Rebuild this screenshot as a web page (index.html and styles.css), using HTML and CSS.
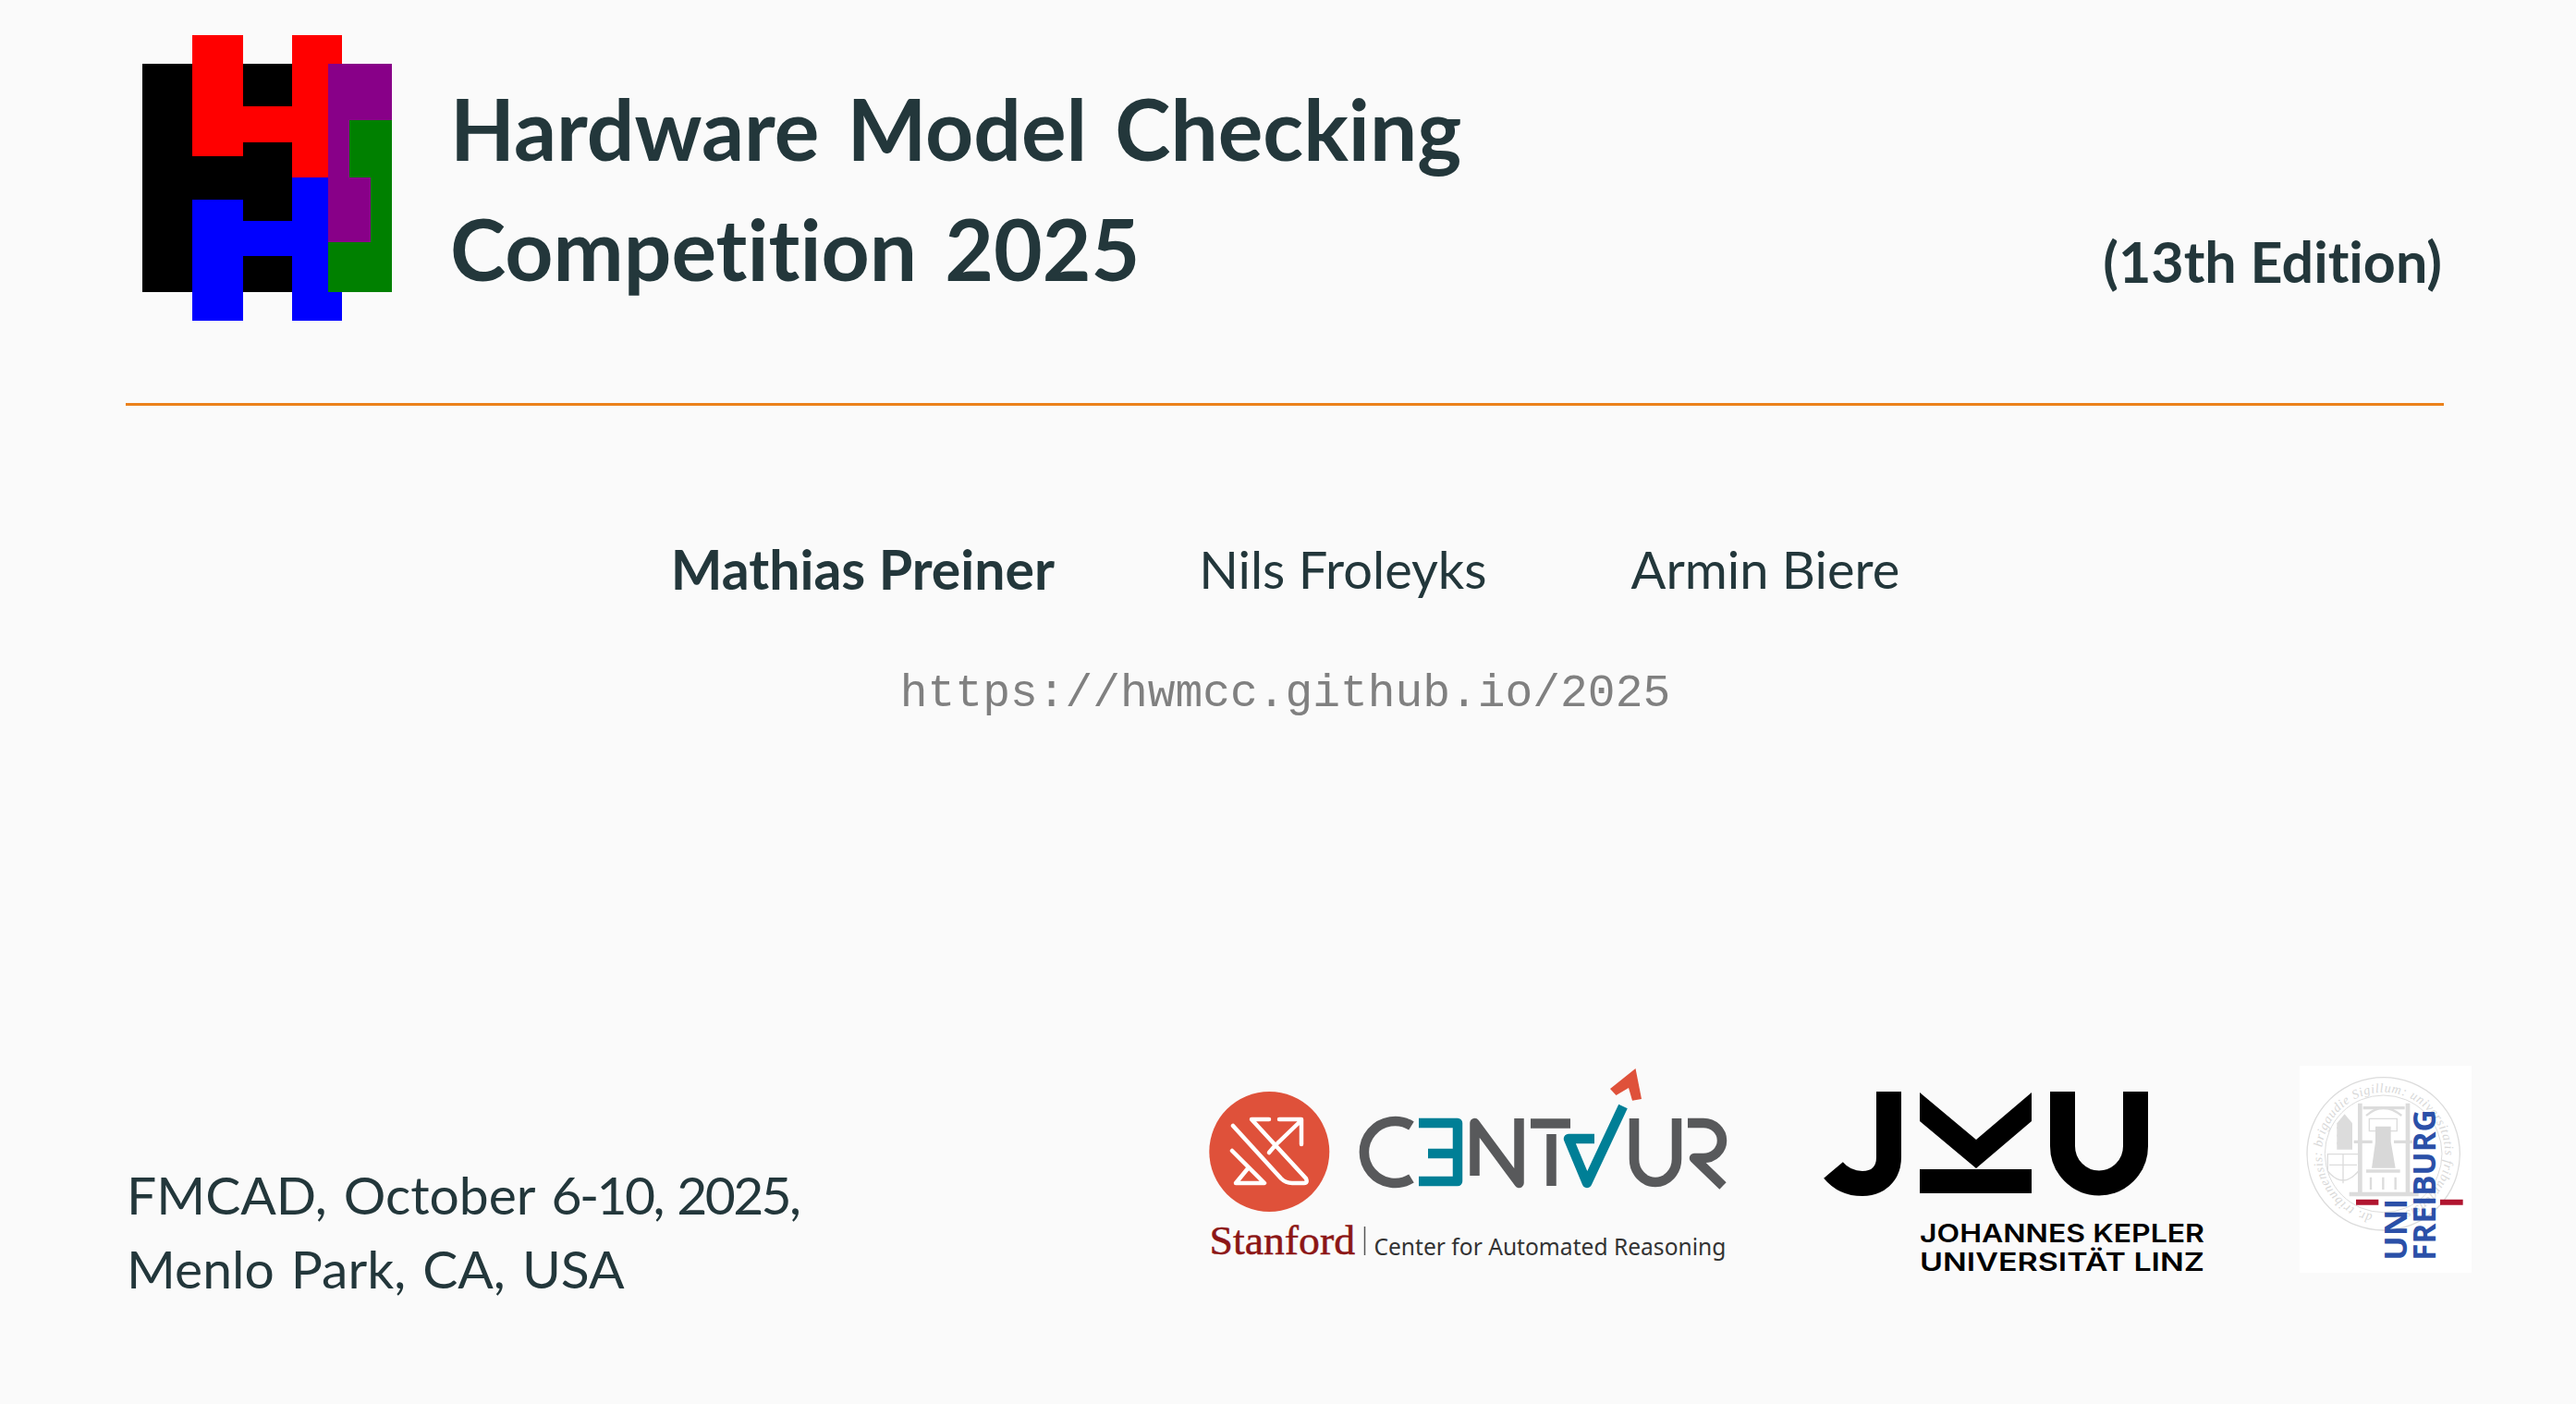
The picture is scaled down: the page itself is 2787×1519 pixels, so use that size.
FILE: index.html
```html
<!DOCTYPE html>
<html lang="en">
<head>
<meta charset="UTF-8">
<title>Hardware Model Checking Competition 2025</title>
<link rel="stylesheet" href="styles.css">
</head>
<body>
<div class="slide">
    <div class="header">
        <svg class="hwmcc-logo" viewBox="0 0 270 309" width="270" height="309" role="img" aria-label="HWMCC logo">
            <path fill="#000" d="M0 31H201V278H0z"/>
            <path fill="#f00" d="M54 0H109V77H162V0H216V31H201V154H162V116H109V131H54z"/>
            <path fill="#00f" d="M54 178H109V201H162V154H201V278H216V309H162V239H109V309H54z"/>
            <path fill="#808" d="M201 31H270V92H224V154H247V224H201z"/>
            <path fill="#008000" d="M224 92H270V278H201V224H247V154H224z"/>
        </svg>
        <h1 class="title">Hardware Model Checking<br>Competition 2025</h1>
        <div class="edition">(13th Edition)</div>
    </div>
    <div class="rule"></div>

    <div class="authors">
        <span class="author presenter">Mathias Preiner</span>
        <span class="author">Nils Froleyks</span>
        <span class="author">Armin Biere</span>
    </div>
    <div class="url">https://hwmcc.github.io/2025</div>

    <div class="footer">
        <div class="venue">FMCAD, October <span class="dates">6-10, 2025,</span><br>Menlo Park, CA, USA</div>
        <div class="logos">
            <svg class="logo-centaur" viewBox="0 0 620 260" width="620" height="260" role="img" aria-label="Centaur, Stanford Center for Automated Reasoning">
                <circle cx="93.3" cy="116" r="65" fill="#df513a"/>
                <g fill="none" stroke="#fff" stroke-width="4.5" stroke-linecap="round" stroke-linejoin="round">
                    <path d="M93 81H74L133 145Q135 150 131 150H118Q111 150 106 145L54 88"/>
                    <path d="M53 115L88 150H57L71 133"/>
                    <path d="M102 107L128 82M104 81H128V108M93 117L99 110"/>
                </g>
                <g fill="none" stroke="#58595b" stroke-width="10.5" stroke-linejoin="round">
                    <path d="M247 88A33.5 33.5 0 1 0 247 145"/>
                    <path d="M315.5 142V85L363.5 150V80"/>
                    <path d="M376 85.5H419M398.5 97V153"/>
                    <path d="M488 80V124A23 25 0 0 0 534 124V80"/>
                    <path d="M546 85H563A20 19 0 0 1 563 123H553L584 153"/>
                </g>
                <g fill="none" stroke="#007f96" stroke-width="10.5" stroke-linejoin="round">
                    <path d="M255 85H297V148H255M265 118H297"/>
                    <path d="M445 102H417L437 150L476 67"/>
                </g>
                <path fill="#df513a" d="M462 48L489.5 26L496 59L486 60.7L482 47L468.5 55z"/>
                <text class="stanford" x="28.5" y="227" textLength="157.5" lengthAdjust="spacingAndGlyphs">Stanford</text>
                <path stroke="#555" stroke-width="1.5" d="M196.5 197V228"/>
                <text class="car" x="206.4" y="228" textLength="381" lengthAdjust="spacingAndGlyphs">Center for Automated Reasoning</text>
            </svg>
            <svg class="logo-jku" viewBox="0 0 460 260" width="460" height="260" role="img" aria-label="Johannes Kepler Universität Linz">
                <g fill="none" stroke="#000" stroke-width="27">
                    <path d="M93.5 41V112C93.5 131 80 140.5 65 140.5C52 140.5 41 135 33.5 126"/>
                    <path d="M281.5 41V100A39.5 40 0 0 0 360.5 100V41"/>
                </g>
                <path d="M127 42L188 93L248 42V73L188 124L127 73zM127 125H248V151H127z"/>
                <text class="jku-name" x="127" y="204" textLength="308" lengthAdjust="spacingAndGlyphs">JOHANNES KEPLER</text>
                <text class="jku-name" x="127" y="235" textLength="308" lengthAdjust="spacingAndGlyphs">UNIVERSITÄT LINZ</text>
            </svg>
            <svg class="logo-freiburg" viewBox="54 38 558 672" width="186" height="224" role="img" aria-label="Uni Freiburg">
                <rect x="54" y="38" width="558" height="672" fill="#fff"/>
                <g fill="none" stroke="#dcdcdc">
                    <circle cx="326" cy="324" r="248" stroke-width="4"/>
                    <circle cx="326" cy="324" r="190" stroke-width="3"/>
                    <path stroke-width="14" d="M250 160V450M405 160V450M215 455H440"/>
                    <path stroke-width="10" d="M260 175H395M230 285H290M360 285H420M270 380H380"/>
                    <path stroke-width="7" d="M270 200Q325 150 385 200M175 240H225M175 265H225M175 290H225M285 400V440M325 400V440M365 400V440"/>
                    <path stroke-width="4" d="M145 325H245V380Q195 440 145 380zM195 325V420M150 360H240M280 210H370V250H280z"/>
                </g>
                <path fill="#dcdcdc" d="M200 195L225 225V310H175V225z"/>
                <path fill="#d8d8d8" d="M300 235H350V285L365 370H288L300 285z"/>
                <path id="seal-ring" fill="none" d="M291 521A200 200 0 1 1 361 521"/>
                <text class="seal-text"><textPath href="#seal-ring" textLength="1150">dr. tribunensis: brigaudie Sigillum: universitatis friburgensis</textPath></text>
                <path fill="#b0142f" d="M237 472H310V490H237zM510 472H584V490H510z"/>
                <text class="freiburg-name" transform="translate(402 670) rotate(-90)" textLength="200" lengthAdjust="spacingAndGlyphs">UNI</text>
                <text class="freiburg-name" transform="translate(495 670) rotate(-90)" textLength="490" lengthAdjust="spacingAndGlyphs">FREIBURG</text>
            </svg>
        </div>
    </div>
</div>
</body>
</html>
```

FILE: styles.css
```css
html, body {
    margin: 0;
    height: 100%;
    overflow: hidden;
}

body {
    background-color: #fafafa;
    color: #23373b;
    font-family: Lato, 'Noto Sans', sans-serif;
    font-variant-ligatures: none;
}

.slide {
    height: 100vh;
    box-sizing: border-box;
    padding: 38px 143px 0 137px;
    display: flex;
    flex-direction: column;
}

.header {
    display: flex;
    height: 398px;
}

.hwmcc-logo {
    margin-left: 17px;
    flex: none;
}

.title {
    margin: 36px 0 0 63px;
    font-size: 91px;
    font-weight: 700;
    line-height: 130px;
    word-spacing: 8px;
    white-space: nowrap;
}

.edition {
    margin: 180px 2px 0 auto;
    font-size: 61px;
    font-weight: 700;
    line-height: 130px;
    white-space: nowrap;
}

.rule {
    height: 3px;
    margin-left: -1px;
    background-color: #eb811b;
}

.authors {
    display: flex;
    justify-content: center;
    gap: 156px;
    margin-top: 137px;
    font-size: 56px;
    line-height: 80px;
}

.presenter {
    font-size: 59px;
    font-weight: 700;
}

.url {
    margin-top: 55px;
    text-align: center;
    font-family: 'Liberation Mono', monospace;
    font-size: 49.6px;
    line-height: 80px;
    color: #808080;
}

.footer {
    display: flex;
    justify-content: space-between;
    margin-top: 339px;
}

.venue {
    margin-top: 122px;
    font-size: 57px;
    line-height: 80px;
    word-spacing: 3.5px;
}

.dates {
    letter-spacing: -2.6px;
}

.logos {
    display: flex;
    align-items: flex-start;
    margin-right: -30px;
}

.logo-jku {
    margin: 10px 0 0 50px;
}

.logo-freiburg {
    margin: 23px 0 0 78px;
}

.stanford {
    font-family: 'Liberation Serif', serif;
    font-size: 44px;
    fill: #8c1515;
    stroke: #8c1515;
    stroke-width: 0.5px;
}

.car {
    font-family: 'Noto Sans', sans-serif;
    font-size: 25px;
    fill: #333;
}

.jku-name {
    font-family: Inter, sans-serif;
    font-size: 27px;
    font-weight: 600;
}

.seal-text {
    font-family: 'Liberation Serif', serif;
    font-style: italic;
    font-size: 42px;
    fill: #d8d8d8;
}

.freiburg-name {
    font-family: 'Open Sans', sans-serif;
    font-size: 104px;
    font-weight: 700;
    fill: #2b50a8;
}
```
